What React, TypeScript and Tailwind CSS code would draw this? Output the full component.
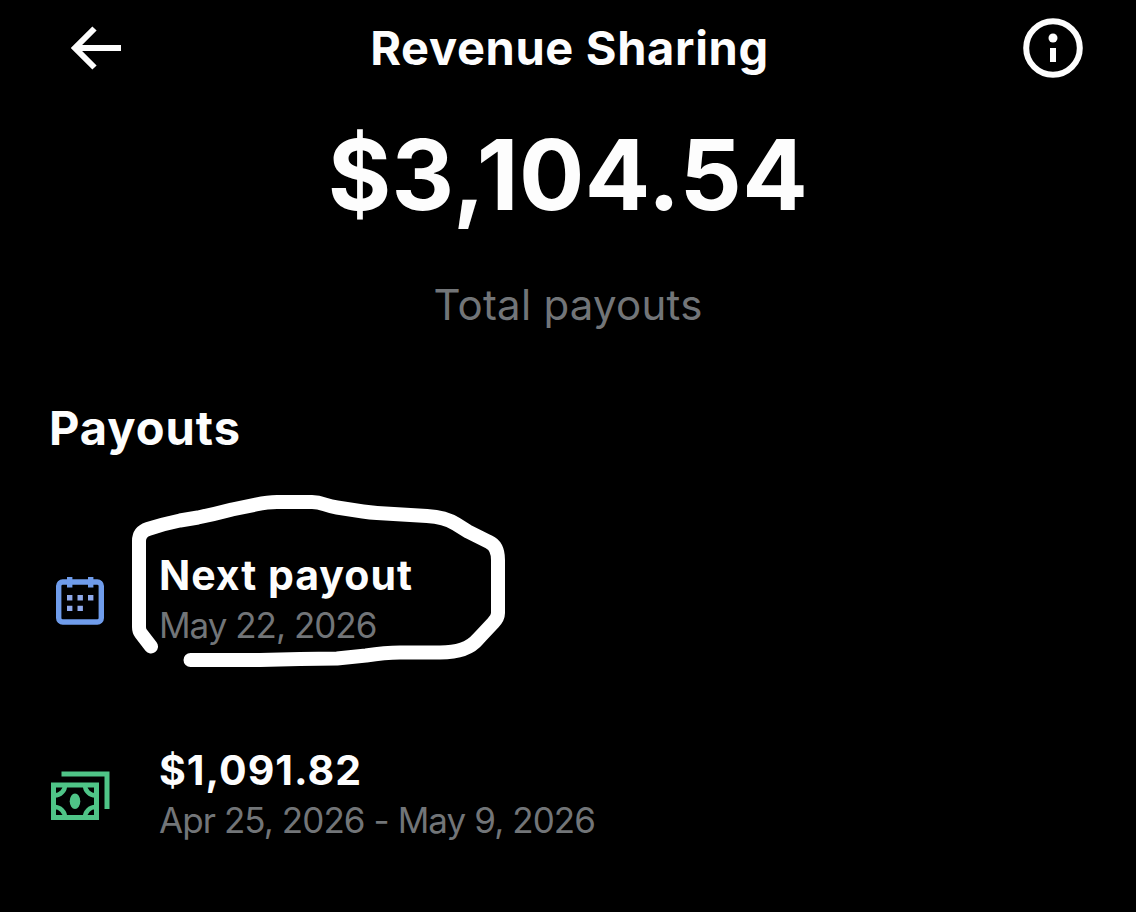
const BackArrow = () => {
  return (
    <svg width="52" height="44" viewBox="0 0 52 44" fill="none">
      <path
        d="M24.500 2.500 L5 22 L24.500 41.500 M5 22 H51"
        stroke="#fdfdfd"
        strokeWidth="6"
      />
    </svg>
  );
};

const InfoIcon = () => {
  return (
    <svg width="60" height="60" viewBox="0 0 60 60" fill="none">
      <circle cx="30" cy="30" r="26.8" stroke="#fdfdfd" strokeWidth="6" />
      <circle cx="30" cy="20" r="4.5" fill="#fdfdfd" />
      <rect x="27" y="30" width="6" height="14" fill="#fdfdfd" />
    </svg>
  );
};

const CalendarIcon = () => {
  return (
    <svg width="60" height="50" viewBox="0 0 60 50" fill="none">
      <rect x="8.7" y="6" width="42.6" height="40" rx="4" stroke="#6f9ceb" strokeWidth="5.4" />
      <path
        d="M17 1h5.4v10.5H17zM38 1h5.4v10.5H38z"
        fill="#6f9ceb"
      />
      <path
        d="M17 19h5.4v5.4H17zM27.5 19h5.4v5.4h-5.4zM38 19h5.4v5.4H38zM17 29.700h5.4v5.4H17zM27.5 29.700h5.4v5.4h-5.4z"
        fill="#8fa9ea"
      />
    </svg>
  );
};

const CashIcon = () => {
  return (
    <svg width="60" height="50" viewBox="0 0 60 50" fill="none" stroke="#4fc487">
      <path d="M11.5 3 H57 V38" strokeWidth="5" />
      <rect x="3.5" y="14" width="43" height="32.5" strokeWidth="5" />
      <path
        d="M15 13.500 A10.5 10.5 0 0 1 4 24.500 M35 13.500 A10.5 10.5 0 0 0 46 24.500 M15 47 A10.5 10.5 0 0 0 4 36 M35 47 A10.5 10.5 0 0 1 46 36"
        strokeWidth="4.5"
      />
      <ellipse cx="25" cy="30.2" rx="5.3" ry="7.8" fill="#4fc487" stroke="none" />
    </svg>
  );
};

// hand drawn loop round the next payout
const Marker = () => {
  return (
    <svg
      className="absolute -left-[29px] -top-[60px] pointer-events-none"
      width="380"
      height="180"
      viewBox="130 490 380 180"
      fill="none"
    >
      <path
        d="M151 646.500 L141 633.500 Q139 631 139 627 V541 Q139 532 148 529 Q163 524 180 520.500 L198 517.500 Q215 514 232 509.500 L256 504.500 Q268 502 277 502 H312 Q318 502 325 504.500 Q331 506.500 337 507.500 L363 511.500 Q370 512.500 377 513 L427 516 Q445 517 456 524 L468 531.500 L489 542 Q498 546 498 560 V613 Q498 618 493 623 L478 639 Q467 652.500 440 652.500 H400 Q385 652.500 366 655.500 L337 658.500 L300 659 L260 660 H190.500"
        stroke="#fff"
        strokeWidth="14"
        strokeLinecap="round"
        strokeLinejoin="round"
      />
    </svg>
  );
};

export default function App() {
  return (
    <div className="w-full h-[912px] bg-black text-[#fdfdfd] font-['Inter','Liberation_Sans',sans-serif] overflow-hidden">
      <header className="h-24 pl-[70px] pr-[53px] flex items-center justify-between">
        <button className="w-[60px]">
          <BackArrow />
        </button>
        <h1 className="mr-3.5 text-[47px] leading-[56px] font-bold tracking-[0.65px] whitespace-nowrap">
          Revenue Sharing
        </h1>
        <button>
          <InfoIcon />
        </button>
      </header>

      <div className="pt-[27px] flex flex-col items-center">
        <p className="text-[97px] leading-[104px] font-bold tracking-[0.45px]">
          $3,104.54
        </p>
        <p className="mt-[50px] text-[42px] leading-[56px] tracking-[0.25px] text-[#727578]">
          Total payouts
        </p>
      </div>

      <div className="mt-[67px] pl-[50px]">
        <h2 className="-ml-px text-[47px] leading-[56px] font-bold tracking-[1px]">
          Payouts
        </h2>
        <div className="mt-[94px] flex flex-col gap-[94px]">
          <div className="flex items-center gap-[49px]">
            <CalendarIcon />
            <div className="relative">
              <p className="text-[41px] leading-[50px] font-bold tracking-[1px]">
                Next payout
              </p>
              <p className="text-[35px] leading-[51px] tracking-[-1px] text-[#727578]">
                May 22, 2026
              </p>
              <Marker />
            </div>
          </div>
          <div className="flex items-center gap-[49px]">
            <CashIcon />
            <div>
              <p className="text-[41px] leading-[50px] font-bold tracking-[1px]">
                $1,091.82
              </p>
              <p className="text-[35px] leading-[51px] tracking-[-0.92px] text-[#727578]">
                Apr 25, 2026 - May 9, 2026
              </p>
            </div>
          </div>
        </div>
      </div>
    </div>
  );
}
